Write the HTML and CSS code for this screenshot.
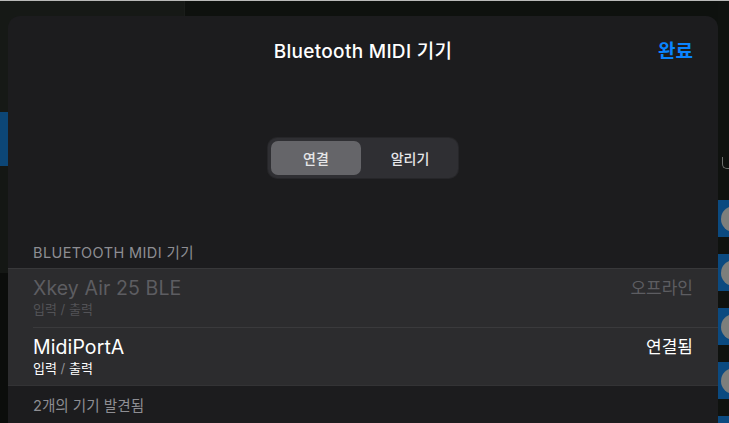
FILE: index.html
```html
<!DOCTYPE html>
<html lang="ko">
<head>
    <meta charset="UTF-8">
    <meta name="viewport" content="width=device-width, initial-scale=1.0">
    <title>Bluetooth MIDI 기기</title>
    <link rel="stylesheet" href="styles.css">
</head>
<body>
    <div class="backdrop">
        <div class="left-pane">
            <div class="lp-top"></div>
            <div class="lp-blue"></div>
            <div class="lp-mid"></div>
            <div class="lp-bottom"></div>
        </div>
        <div class="center-pane"></div>
        <div class="right-pane">
            <div class="rp-label"><span class="rp-glyph"></span></div>
            <div class="rp-tile"><span class="rp-knob"></span></div>
            <div class="rp-tile"><span class="rp-knob"></span></div>
            <div class="rp-tile"><span class="rp-knob"></span></div>
            <div class="rp-tile"><span class="rp-knob"></span></div>
            <div class="rp-tile"><span class="rp-knob"></span></div>
        </div>
    </div>

    <div class="sheet">
        <div class="sheet-header">
            <span></span>
            <h1 class="sheet-title">Bluetooth MIDI 기기</h1>
            <a class="done" href="#">완료</a>
        </div>

        <div class="segmented">
            <button class="seg active">연결</button>
            <button class="seg">알리기</button>
        </div>

        <div class="section-label">BLUETOOTH MIDI 기기</div>
        <ul class="device-list">
            <li class="device offline">
                <div class="device-info">
                    <div class="device-name">Xkey Air 25 BLE</div>
                    <div class="device-io">입력 <span class="slash">/</span> 출력</div>
                </div>
                <div class="device-state">오프라인</div>
            </li>
            <li class="device">
                <div class="device-info">
                    <div class="device-name">MidiPortA</div>
                    <div class="device-io">입력 <span class="slash">/</span> 출력</div>
                </div>
                <div class="device-state">연결됨</div>
            </li>
        </ul>
        <div class="section-footer">2개의 기기 발견됨</div>
    </div>
</body>
</html>
```

FILE: styles.css
```css
body {
    margin: 0;
    width: 729px;
    height: 423px;
    overflow: hidden;
    position: relative;
    background: #0f120f;
    font-family: "Inter", "Noto Sans CJK KR", sans-serif;
}

/* app behind the sheet */
.backdrop {
    display: flex;
    height: 422px;
    border-top: 1px solid #b9bab8;
}
.left-pane {
    width: 184px;
    display: flex;
    flex-direction: column;
}
.lp-top {
    height: 111px;
    background: #161916;
}
.lp-blue {
    height: 54px;
    background: #0c4676;
}
.lp-mid {
    height: 107px;
    background: #141714;
}
.lp-bottom {
    flex: 1;
    background: #0b0d0b;
}
.center-pane {
    flex: 1;
    background: #0e110e;
    border-left: 1px solid #1a1d1a;
}
.right-pane {
    width: 11px;
    display: flex;
    flex-direction: column;
    gap: 17px;
    padding-top: 153px;
    background: #0f120f;
    overflow: hidden;
}
.rp-label {
    flex: none;
    height: 29px;
    padding: 3px 0 0 4px;
    box-sizing: border-box;
}
.rp-glyph {
    display: block;
    width: 10px;
    height: 11px;
    border-left: 1.5px solid #6c6f6c;
    border-bottom: 1.5px solid #6c6f6c;
    border-radius: 0 0 0 5px;
}
.rp-tile {
    flex: none;
    height: 37px;
    background: #0b4a80;
    display: flex;
    align-items: center;
    padding-left: 3px;
}
.rp-knob {
    flex: none;
    width: 26px;
    height: 26px;
    border-radius: 50%;
    background: #7d7f7c;
}

/* modal sheet */
.sheet {
    position: absolute;
    left: 8px;
    top: 16px;
    width: 710px;
    height: 420px;
    background: #1c1c1e;
    border-radius: 12px 12px 0 0;
    color: #fff;
}
.sheet-header {
    height: 66px;
    display: grid;
    grid-template-columns: 1fr auto 1fr;
    align-items: center;
    padding: 0 25px;
}
.sheet-title {
    margin: 0;
    font-size: 19px;
    font-weight: 500;
    letter-spacing: 0.3px;
}
.done {
    justify-self: end;
    color: #0a84ff;
    text-decoration: none;
    font-size: 19px;
    font-weight: 700;
}

.segmented {
    width: 184px;
    height: 34px;
    margin: 56px auto 0;
    padding: 3px;
    display: flex;
    gap: 4px;
    background: #2f2f33;
    border-radius: 9px;
    box-shadow: 0 0 0 1px #262629;
}
.seg {
    flex: 1;
    border: 0;
    border-radius: 7px;
    background: transparent;
    color: #e6e6e8;
    font-family: inherit;
    font-size: 14px;
    font-weight: 500;
}
.seg.active {
    flex: none;
    width: 90px;
    background: #656569;
}

.section-label {
    margin-top: 58px;
    height: 32px;
    display: flex;
    align-items: center;
    padding: 0 25px 2px;
    box-sizing: border-box;
    color: #8e8e93;
    font-size: 14.5px;
    letter-spacing: 0.4px;
}
.device-list {
    list-style: none;
    margin: 0;
    padding: 0 0 0 25px;
    background: #2c2c2e;
    border-top: 1px solid #38383a;
    border-bottom: 1px solid #333335;
}
.device {
    height: 58px;
    display: flex;
    align-items: flex-start;
    justify-content: space-between;
    padding-right: 25px;
    box-sizing: border-box;
}
.device + .device {
    border-top: 1px solid #3a3a3c;
}
.device-info {
    padding-top: 7px;
}
.device-name {
    font-size: 19.5px;
    line-height: 25px;
    letter-spacing: 0.1px;
}
.device-io {
    font-size: 13px;
    line-height: 17px;
}
.slash {
    color: #8e8e93;
}
.device-state {
    padding-top: 8px;
    font-size: 17px;
    line-height: 23px;
}
.device.offline .device-name,
.device.offline .device-state {
    color: #5d5d61;
}
.device.offline .device-io,
.device.offline .slash {
    color: #535357;
}
.section-footer {
    padding: 8px 25px 0;
    color: #8e8e93;
    font-size: 14.6px;
}
```
